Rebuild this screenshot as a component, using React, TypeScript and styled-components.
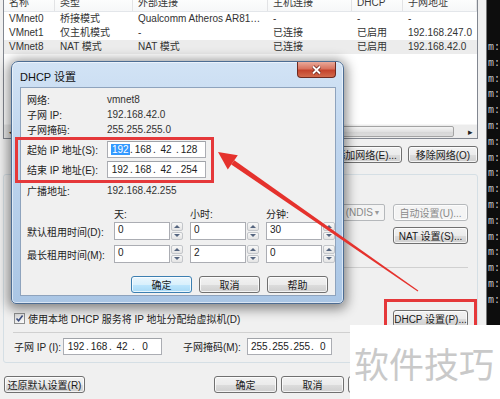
import React from 'react'
import styled, { createGlobalStyle } from 'styled-components'

const GlobalStyle = createGlobalStyle`
  * { box-sizing: border-box; }
  html, body { margin: 0; padding: 0; }
  body {
    width: 500px;
    height: 399px;
    overflow: hidden;
    background: #f0f0f0;
    font-family: "Liberation Sans", "Noto Sans CJK SC", sans-serif;
    font-size: 10px;
    color: #222;
  }
`

const COLS = '51px 78px 135px 84px 51px 1fr'

const networks = [
  { name: 'VMnet0', type: '桥接模式', ext: 'Qualcomm Atheros AR8161/8165 PCI-E Gigabit Ethernet Controller', host: '-', dhcp: '-', subnet: '-' },
  { name: 'VMnet1', type: '仅主机模式', ext: '-', host: '已连接', dhcp: '已启用', subnet: '192.168.247.0' },
  { name: 'VMnet8', type: 'NAT 模式', ext: 'NAT 模式', host: '已连接', dhcp: '已启用', subnet: '192.168.42.0', selected: true },
]

const termLines = Array.from({ length: 17 }, () => 'm:\\')

function IpField({ parts, sel, w }: { parts: string[]; sel?: number; w: number }) {
  return (
    <IpBox $w={w}>
      {parts.map((p, i) => (
        <React.Fragment key={i}>
          {i > 0 && <IpDot>.</IpDot>}
          <IpPart>{i === sel ? <Selected>{p}</Selected> : p}</IpPart>
        </React.Fragment>
      ))}
    </IpBox>
  )
}

function SpinField({ value }: { value: string }) {
  return (
    <Spin>
      <SpinText>{value}</SpinText>
      <Spinner>
        <SpinButton>
          <Tri $up />
        </SpinButton>
        <SpinButton>
          <Tri />
        </SpinButton>
      </Spinner>
    </Spin>
  )
}

const App = () => {
  return (
    <Page>
      <GlobalStyle />
      <Editor>
        <NetTable>
          <HeaderRow>
            {['名称', '类型', '外部连接', '主机连接', 'DHCP', '子网地址'].map((h) => (
              <HeaderCell key={h}>{h}</HeaderCell>
            ))}
          </HeaderRow>
          {networks.map((n) => (
            <NetRow key={n.name} $selected={n.selected}>
              <Cell>{n.name}</Cell>
              <Cell>{n.type}</Cell>
              <Cell>{n.ext}</Cell>
              <Cell>{n.host}</Cell>
              <Cell>{n.dhcp}</Cell>
              <Cell>{n.subnet}</Cell>
            </NetRow>
          ))}
          <TableFill />
          <HScroll>
            <ScrollArrow>◂</ScrollArrow>
            <ScrollThumb />
            <ScrollArrow>▸</ScrollArrow>
          </HScroll>
        </NetTable>

        <ActionRow>
          <WinButton $w={72}>添加网络(E)...</WinButton>
          <WinButton $w={70}>移除网络(O)</WinButton>
        </ActionRow>

        <GroupBox>
          <RightRow $top={29}>
            <DropDown>
              <DropText>
                <span>Qualcomm Atheros AR8161/8165 PCI-E Gigabit Ethernet Controller (NDIS</span>
              </DropText>
              <DropArrow>▼</DropArrow>
            </DropDown>
            <WinButton $w={75} $disabled>自动设置(U)...</WinButton>
          </RightRow>
          <RightRow $top={6}>
            <WinButton $w={75}>NAT 设置(S)...</WinButton>
          </RightRow>
          <Separator $top={23} />
          <DhcpRow>
            <CheckLabel>
              <CheckBox>
                <svg width="9" height="9" viewBox="0 0 9 9">
                  <path d="M1.5 4.5 L3.6 6.8 L7.6 1.6" fill="none" stroke="#3d4f80" strokeWidth="1.6" />
                </svg>
              </CheckBox>
              使用本地 DHCP 服务将 IP 地址分配给虚拟机(D)
            </CheckLabel>
            <WinButton $w={75}>DHCP 设置(P)...</WinButton>
          </DhcpRow>
          <Separator $top={5} />
          <SubnetRow>
            <FieldLabel $w={49}>子网 IP (I):</FieldLabel>
            <IpField parts={['192', '168', '42', '0']} w={99} />
            <FieldLabel $w={64} $gap={21}>子网掩码(M):</FieldLabel>
            <IpField parts={['255', '255', '255', '0']} w={85} />
          </SubnetRow>
        </GroupBox>

        <Footer>
          <WinButton $w={81}>还原默认设置(R)</WinButton>
          <FooterRight>
            <WinButton $w={63}>确定</WinButton>
            <WinButton $w={63}>取消</WinButton>
            <WinButton $w={63}>应用</WinButton>
            <WinButton $w={63}>帮助</WinButton>
          </FooterRight>
        </Footer>
      </Editor>

      <Terminal>
        {termLines.map((l, i) => (
          <div key={i}>{l}</div>
        ))}
      </Terminal>

      <Dialog>
        <TitleBar>
          <Title>DHCP 设置</Title>
          <CloseButton>
            <svg width="13" height="10" viewBox="0 0 13 10">
              <path d="M3 1.5 L10 8.5 M10 1.5 L3 8.5" stroke="#6b2219" strokeWidth="3.4" />
              <path d="M3 1.5 L10 8.5 M10 1.5 L3 8.5" stroke="#fff" strokeWidth="1.9" />
            </svg>
          </CloseButton>
        </TitleBar>
        <Client>
          <InfoList>
            <InfoRow>
              <FormLabel>网络:</FormLabel>
              <span>vmnet8</span>
            </InfoRow>
            <InfoRow>
              <FormLabel>子网 IP:</FormLabel>
              <span>192.168.42.0</span>
            </InfoRow>
            <InfoRow>
              <FormLabel>子网掩码:</FormLabel>
              <span>255.255.255.0</span>
            </InfoRow>
          </InfoList>
          <IpRows>
            <FormRow>
              <FormLabel>起始 IP 地址(S):</FormLabel>
              <IpField parts={['192', '168', '42', '128']} sel={0} w={99} />
            </FormRow>
            <FormRow>
              <FormLabel>结束 IP 地址(E):</FormLabel>
              <IpField parts={['192', '168', '42', '254']} w={99} />
            </FormRow>
          </IpRows>
          <InfoRow $top={5}>
            <FormLabel>广播地址:</FormLabel>
            <span>192.168.42.255</span>
          </InfoRow>
          <LeaseHead>
            <FormLabel />
            <span>天:</span>
            <span>小时:</span>
            <span>分钟:</span>
          </LeaseHead>
          <LeaseRow $top={2}>
            <FormLabel>默认租用时间(D):</FormLabel>
            <SpinField value="0" />
            <SpinField value="0" />
            <SpinField value="30" />
          </LeaseRow>
          <LeaseRow $top={5}>
            <FormLabel>最长租用时间(M):</FormLabel>
            <SpinField value="0" />
            <SpinField value="2" />
            <SpinField value="0" />
          </LeaseRow>
          <DialogButtons>
            <WinButton $w={61} $default>确定</WinButton>
            <WinButton $w={61}>取消</WinButton>
            <WinButton $w={61}>帮助</WinButton>
          </DialogButtons>
        </Client>
      </Dialog>

      <Mark $x={15} $y={137} $w={199} $h={46} />
      <Mark $x={384} $y={299} $w={93} $h={46} />

      <ArrowLayer width="500" height="399" viewBox="0 0 500 399">
        <polygon points="231.3,164.4 234.3,160.2 418.3,290.6 417.7,291.4" fill="#e5322d" />
        <polygon points="218,152 227.8,169.4 237.8,155.2" fill="#e5322d" />
      </ArrowLayer>

      <Watermark>软件技巧</Watermark>
    </Page>
  )
}

export default App

const Page = styled.div`
  position: relative;
  width: 500px;
  height: 399px;
  display: flex;
  overflow: hidden;
`

const Editor = styled.div`
  width: 486px;
  height: 399px;
  padding: 0 8px 0 3px;
  display: flex;
  flex-direction: column;
  background: #f0f0f0;
`

const NetTable = styled.div`
  margin-top: -6px;
  height: 145px;
  border: 1px solid #828790;
  background: #fff;
  display: flex;
  flex-direction: column;
`

const HeaderRow = styled.div`
  display: grid;
  grid-template-columns: ${COLS};
  height: 17px;
  border-bottom: 1px solid #e3e6ea;
  background: linear-gradient(#ffffff, #f6f7f8);
  overflow: hidden;
`

const HeaderCell = styled.div`
  padding: 0 5px;
  height: 16px;
  line-height: 16px;
  color: #3a3a3a;
  border-right: 1px solid #e2e3e5;
  white-space: nowrap;
  overflow: hidden;
`

const NetRow = styled.div<{ $selected?: boolean }>`
  display: grid;
  grid-template-columns: ${COLS};
  height: 14px;
  line-height: 14px;
  background: ${(p) => (p.$selected ? '#ececec' : 'transparent')};
`

const Cell = styled.div`
  padding: 0 5px;
  height: 14px;
  color: #333;
  white-space: nowrap;
  overflow: hidden;
  text-overflow: ellipsis;
`

const TableFill = styled.div`
  flex: 1;
`

const HScroll = styled.div`
  height: 14px;
  display: flex;
  background: #ececec;
  border-top: 1px solid #f6f6f6;
`

const ScrollArrow = styled.div`
  width: 14px;
  display: flex;
  align-items: center;
  justify-content: center;
  font-size: 9px;
  color: #222;
`

const ScrollThumb = styled.div`
  flex: 1;
  margin: 1px 9px 1px 0;
  border: 1px solid #a3a3a3;
  border-radius: 2px;
  background: linear-gradient(#f4f4f4, #e2e2e2 50%, #d6d6d6 51%, #dcdcdc);
`

const ActionRow = styled.div`
  margin-top: 7px;
  display: flex;
  justify-content: flex-end;
  gap: 6px;
`

const WinButton = styled.button<{ $w: number; $default?: boolean; $disabled?: boolean }>`
  width: ${(p) => p.$w}px;
  height: 17px;
  flex: none;
  padding: 0;
  font: inherit;
  white-space: nowrap;
  color: ${(p) => (p.$disabled ? '#8a8a8a' : '#1a1a1a')};
  border: 1px solid ${(p) => (p.$default ? '#3c7fb1' : p.$disabled ? '#b5b8bb' : '#707070')};
  border-radius: 3px;
  background: ${(p) =>
    p.$default
      ? 'linear-gradient(#eaf6fd 0%, #d9f0fc 50%, #bee6fd 51%, #a7d9f5 100%)'
      : p.$disabled
      ? '#f4f4f4'
      : 'linear-gradient(#f2f2f2 0%, #ebebeb 50%, #dddddd 51%, #cfcfcf 100%)'};
  box-shadow: inset 0 0 0 1px rgba(255, 255, 255, 0.75);
`

const GroupBox = styled.div`
  margin-top: 11px;
  height: 189px;
  border: 1px solid #d5dfe5;
  border-radius: 3px;
  padding: 0 9px;
  display: flex;
  flex-direction: column;
`

const RightRow = styled.div<{ $top: number }>`
  margin-top: ${(p) => p.$top}px;
  height: 17px;
  display: flex;
  justify-content: flex-end;
  gap: 8px;
`

const DropDown = styled.div`
  width: 100px;
  height: 17px;
  display: flex;
  border: 1px solid #b5b8bb;
  border-radius: 2px;
  background: #f4f4f4;
  color: #8a8a8a;
`

const DropText = styled.div`
  flex: 1;
  display: flex;
  justify-content: flex-end;
  overflow: hidden;
  white-space: nowrap;
  line-height: 15px;
  margin-right: -3px;
`

const DropArrow = styled.div`
  width: 14px;
  font-size: 7px;
  line-height: 15px;
  text-align: center;
  color: #9a9a9a;
`

const Separator = styled.div<{ $top: number }>`
  margin-top: ${(p) => p.$top}px;
  height: 1px;
  background: #d0d0d0;
`

const DhcpRow = styled.div`
  margin-top: 42px;
  height: 17px;
  display: flex;
  align-items: center;
  justify-content: space-between;
`

const CheckLabel = styled.label`
  display: flex;
  align-items: center;
  gap: 3px;
  padding-left: 1px;
  color: #222;
`

const CheckBox = styled.span`
  width: 11px;
  height: 11px;
  display: flex;
  align-items: center;
  justify-content: center;
  border: 1px solid #8e8f8f;
  background: linear-gradient(135deg, #dcdcdc, #fbfbfb);
`

const SubnetRow = styled.div`
  margin-top: 5px;
  height: 17px;
  display: flex;
  align-items: center;
  padding-left: 1px;
`

const FieldLabel = styled.span<{ $w: number; $gap?: number }>`
  width: ${(p) => p.$w}px;
  margin-left: ${(p) => p.$gap || 0}px;
  flex: none;
  white-space: nowrap;
`

const IpBox = styled.div<{ $w: number }>`
  width: ${(p) => p.$w}px;
  height: 17px;
  flex: none;
  display: flex;
  align-items: center;
  padding-left: 3px;
  border: 1px solid #abadb3;
  border-top-color: #a0a3a8;
  background: #fff;
  color: #222;
`

const IpPart = styled.span`
  width: 18px;
  text-align: center;
  white-space: nowrap;
`

const IpDot = styled.span`
  width: 5px;
  text-align: center;
`

const Selected = styled.span`
  background: #3399ff;
  color: #fff;
  padding: 0 1px;
`

const Footer = styled.div`
  margin-top: 13px;
  height: 17px;
  display: flex;
  justify-content: space-between;
  padding-left: 1px;
`

const FooterRight = styled.div`
  display: flex;
  gap: 4px;
`

const Terminal = styled.div`
  flex: 1;
  height: 399px;
  background: #0d0d0d;
  border-left: 1px solid #777;
  padding: 40px 0 0 1px;
  color: #c8c8c8;
  font-family: "Liberation Mono", monospace;
  font-size: 10px;
  line-height: 15.8px;
  overflow: hidden;
  white-space: pre;
`

const Dialog = styled.div`
  position: absolute;
  left: 11px;
  top: 61px;
  width: 333px;
  height: 243px;
  display: flex;
  flex-direction: column;
  padding: 0 7px 7px 8px;
  border: 1px solid #4d6d93;
  border-radius: 7px 7px 5px 5px;
  background: linear-gradient(180deg, #d2e3f5 0%, #bfd5ee 35%, #aac6e5 100%);
  box-shadow: 0 2px 12px 3px rgba(0, 0, 0, 0.45), inset 0 0 0 1px rgba(255, 255, 255, 0.55);
`

const TitleBar = styled.div`
  height: 25px;
  display: flex;
  justify-content: space-between;
  align-items: flex-start;
`

const Title = styled.div`
  padding: 6px 0 0 0;
  font-size: 11px;
  color: #111;
`

const CloseButton = styled.div`
  width: 39px;
  height: 16px;
  display: flex;
  align-items: center;
  justify-content: center;
  border: 1px solid #6e2a20;
  border-top: none;
  border-radius: 0 0 4px 4px;
  background: linear-gradient(#e9a99a 0%, #d8735f 45%, #c4432c 55%, #d26a4c 100%);
`

const Client = styled.div`
  flex: 1;
  display: flex;
  flex-direction: column;
  padding: 4px 0 0 6px;
  border: 1px solid #8ea3bd;
  background: #f0f0f0;
`

const InfoList = styled.div`
  display: flex;
  flex-direction: column;
`

const InfoRow = styled.div<{ $top?: number }>`
  margin-top: ${(p) => p.$top || 0}px;
  height: 15px;
  display: flex;
  align-items: center;
  color: #333;
`

const FormLabel = styled.span`
  width: 80px;
  flex: none;
  white-space: nowrap;
  color: #222;
`

const IpRows = styled.div`
  margin-top: 4px;
  display: flex;
  flex-direction: column;
  gap: 3px;
`

const FormRow = styled.div`
  height: 17px;
  display: flex;
  align-items: center;
`

const LeaseHead = styled.div`
  margin-top: 8px;
  height: 14px;
  display: grid;
  grid-template-columns: 80px 69px 69px 69px;
  column-gap: 7px;
  align-items: center;
`

const LeaseRow = styled.div<{ $top: number }>`
  margin-top: ${(p) => p.$top}px;
  height: 18px;
  display: grid;
  grid-template-columns: 80px 69px 69px 69px;
  column-gap: 7px;
  align-items: center;
`

const Spin = styled.div`
  height: 18px;
  display: flex;
  gap: 1px;
`

const SpinText = styled.div`
  flex: 1;
  border: 1px solid #abadb3;
  background: #fff;
  padding: 1px 3px;
  line-height: 12px;
`

const Spinner = styled.div`
  width: 12px;
  display: flex;
  flex-direction: column;
  gap: 1px;
`

const SpinButton = styled.div`
  flex: 1;
  display: flex;
  align-items: center;
  justify-content: center;
  border: 1px solid #c3c6ca;
  border-radius: 2px;
  background: linear-gradient(#f8f8f8, #e4e4e4);
`

const Tri = styled.span<{ $up?: boolean }>`
  width: 0;
  height: 0;
  border-left: 3px solid transparent;
  border-right: 3px solid transparent;
  ${(p) => (p.$up ? 'border-bottom: 3px solid #55657f;' : 'border-top: 3px solid #55657f;')}
`

const DialogButtons = styled.div`
  margin-top: 13px;
  padding-right: 7px;
  display: flex;
  justify-content: flex-end;
  gap: 7px;
`

const Mark = styled.div<{ $x: number; $y: number; $w: number; $h: number }>`
  position: absolute;
  left: ${(p) => p.$x}px;
  top: ${(p) => p.$y}px;
  width: ${(p) => p.$w}px;
  height: ${(p) => p.$h}px;
  border: 3px solid #e5383a;
  pointer-events: none;
`

const ArrowLayer = styled.svg`
  position: absolute;
  left: 0;
  top: 0;
  pointer-events: none;
`

const Watermark = styled.div`
  position: absolute;
  left: 350px;
  top: 325px;
  right: 0;
  bottom: 0;
  display: flex;
  align-items: center;
  padding-left: 4px;
  background: #fff;
  font-family: "Noto Sans CJK SC", sans-serif;
  font-size: 35px;
  color: #c9c9c9;
  letter-spacing: 0;
`
